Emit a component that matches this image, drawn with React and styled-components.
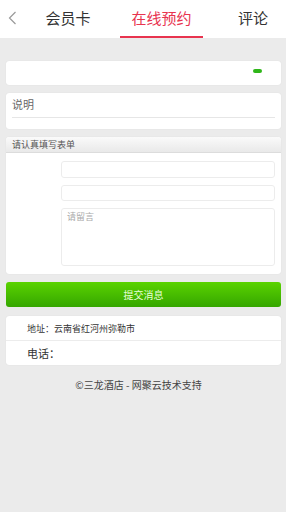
import React from 'react'
import styled, { createGlobalStyle } from 'styled-components'

const Global = createGlobalStyle`
    html, body {
        margin: 0;
        padding: 0;
        background: #ebebeb;
        font-family: "Noto Sans CJK SC", "Liberation Sans", sans-serif;
    }
    * { box-sizing: border-box; }
`

const tabs = [
    { label: '会员卡', w: '64px', gap: '0' },
    { label: '在线预约', w: '83px', gap: '20px', active: true },
    { label: '评论', w: '66px', gap: '17px' },
]

const App = () => {
    return (
        <Page>
            <Global />
            <Header>
                <Back>
                    <svg width="9" height="14" viewBox="0 0 9 14">
                        <path d="M7.5 1 L1.5 7 L7.5 13" fill="none" stroke="#9a9a9a" strokeWidth="1.2" />
                    </svg>
                </Back>
                {tabs.map(t => (
                    <Tab key={t.label} active={t.active} w={t.w} gap={t.gap}>{t.label}</Tab>
                ))}
            </Header>

            <Body>
                <Card>
                    <Row>
                        <Pill />
                    </Row>
                </Card>

                <Card>
                    <Desc>说明</Desc>
                </Card>

                <Card>
                    <FormHead>请认真填写表单</FormHead>
                    <FormBody>
                        <Input />
                        <Input h="16px" />
                        <Textarea>请留言</Textarea>
                    </FormBody>
                </Card>

                <Submit>提交消息</Submit>

                <Card>
                    <Info size="9px">地址：云南省红河州弥勒市</Info>
                    <Info size="11px" last>电话：</Info>
                </Card>

                <Footer>©三龙酒店 - 网聚云技术支持</Footer>
            </Body>
        </Page>
    )
}

export default App


const Page = styled.div`
    width: 286px;
    min-height: 512px;
    background: #ebebeb;
`

const Header = styled.div`
    height: 38px;
    background: #fff;
    display: flex;
    align-items: stretch;
`

const Back = styled.div`
    width: 36px;
    padding-left: 8px;
    display: flex;
    align-items: center;
    padding-bottom: 2px;
`

const Tab = styled.div`
    width: ${props => props.w};
    margin-left: ${props => props.gap};
    height: 38px;
    display: flex;
    align-items: center;
    justify-content: center;
    padding-bottom: 2px;
    font-size: 15px;
    color: ${props => props.active ? '#e8344f' : '#333'};
    border-bottom: 2px solid ${props => props.active ? '#e8344f' : 'transparent'};
`

const Body = styled.div`
    padding: 23px 5px 0 6px;
    display: flex;
    flex-direction: column;
`

const Card = styled.div`
    background: #fff;
    border-radius: 3px;
    box-shadow: 0 0 1px rgba(0, 0, 0, 0.12);
    margin-bottom: 8px;
    overflow: hidden;
`

const Row = styled.div`
    height: 24px;
    display: flex;
    align-items: center;
    justify-content: flex-end;
    padding: 0 19px 4px 0;
`

const Pill = styled.div`
    width: 9px;
    height: 4px;
    border-radius: 2px;
    background: #2fb619;
`

const Desc = styled.div`
    margin: 0 6px 11px 6px;
    padding: 3px 0 5px 0;
    font-size: 11px;
    line-height: 16px;
    color: #666;
    border-bottom: 1px solid #e6e6e6;
`

const FormHead = styled.div`
    height: 16px;
    padding-left: 6px;
    font-size: 9px;
    line-height: 15px;
    color: #555;
    background: linear-gradient(#fafafa, #e9e9e9);
    border-bottom: 1px solid #dcdcdc;
`

const FormBody = styled.div`
    padding: 8px 6px 8px 55px;
    display: flex;
    flex-direction: column;
    gap: 7px;
`

const Input = styled.div`
    height: ${props => props.h || '17px'};
    border: 1px solid #ececec;
    border-radius: 3px;
`

const Textarea = styled.div`
    height: 58px;
    border: 1px solid #ececec;
    border-radius: 3px;
    padding: 1px 5px;
    font-size: 9px;
    color: #aaa;
`

const Submit = styled.div`
    height: 25px;
    margin-bottom: 9px;
    border-radius: 3px;
    background: linear-gradient(#5ad300, #35a600);
    color: #e8ffd8;
    font-size: 10px;
    display: flex;
    align-items: center;
    justify-content: center;
`

const Info = styled.div`
    height: ${props => props.last ? '24px' : '25px'};
    display: flex;
    align-items: center;
    padding-left: 21px;
    font-size: ${props => props.size};
    color: #333;
    border-bottom: ${props => props.last ? 'none' : '1px solid #ececec'};
`

const Footer = styled.div`
    text-align: center;
    font-size: 10px;
    color: #444;
    margin-top: 4px;
    padding-right: 10px;
`
